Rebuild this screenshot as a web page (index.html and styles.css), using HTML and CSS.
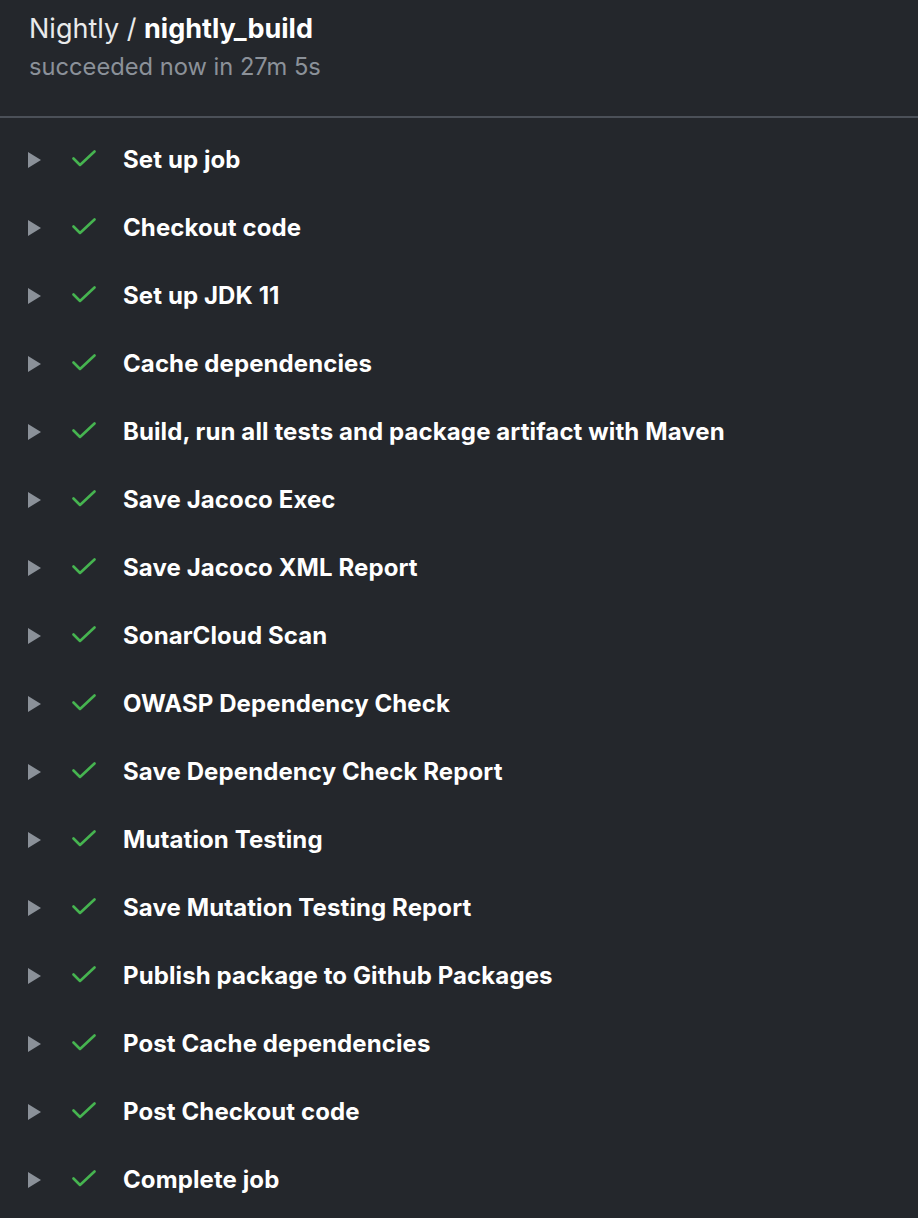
FILE: index.html
```html
<!DOCTYPE html>
<html>
<head>
<meta charset="utf-8">
<link rel="stylesheet" href="styles.css">
</head>
<body>
<div class="page">
  <header class="header">
    <h1 class="title"><span class="wf">Nightly / </span><span class="job">nightly_build</span></h1>
    <div class="status">succeeded now in 27m 5s</div>
  </header>
  <ul class="steps">
    <li class="step"><span class="caret"></span><svg class="check" viewBox="0 0 24 17"><path d="M1.5 8.5 L8 15 L22.5 1.5"/></svg><span class="name">Set up job</span></li>
    <li class="step"><span class="caret"></span><svg class="check" viewBox="0 0 24 17"><path d="M1.5 8.5 L8 15 L22.5 1.5"/></svg><span class="name">Checkout code</span></li>
    <li class="step"><span class="caret"></span><svg class="check" viewBox="0 0 24 17"><path d="M1.5 8.5 L8 15 L22.5 1.5"/></svg><span class="name">Set up JDK 11</span></li>
    <li class="step"><span class="caret"></span><svg class="check" viewBox="0 0 24 17"><path d="M1.5 8.5 L8 15 L22.5 1.5"/></svg><span class="name">Cache dependencies</span></li>
    <li class="step"><span class="caret"></span><svg class="check" viewBox="0 0 24 17"><path d="M1.5 8.5 L8 15 L22.5 1.5"/></svg><span class="name">Build, run all tests and package artifact with Maven</span></li>
    <li class="step"><span class="caret"></span><svg class="check" viewBox="0 0 24 17"><path d="M1.5 8.5 L8 15 L22.5 1.5"/></svg><span class="name">Save Jacoco Exec</span></li>
    <li class="step"><span class="caret"></span><svg class="check" viewBox="0 0 24 17"><path d="M1.5 8.5 L8 15 L22.5 1.5"/></svg><span class="name">Save Jacoco XML Report</span></li>
    <li class="step"><span class="caret"></span><svg class="check" viewBox="0 0 24 17"><path d="M1.5 8.5 L8 15 L22.5 1.5"/></svg><span class="name">SonarCloud Scan</span></li>
    <li class="step"><span class="caret"></span><svg class="check" viewBox="0 0 24 17"><path d="M1.5 8.5 L8 15 L22.5 1.5"/></svg><span class="name">OWASP Dependency Check</span></li>
    <li class="step"><span class="caret"></span><svg class="check" viewBox="0 0 24 17"><path d="M1.5 8.5 L8 15 L22.5 1.5"/></svg><span class="name">Save Dependency Check Report</span></li>
    <li class="step"><span class="caret"></span><svg class="check" viewBox="0 0 24 17"><path d="M1.5 8.5 L8 15 L22.5 1.5"/></svg><span class="name">Mutation Testing</span></li>
    <li class="step"><span class="caret"></span><svg class="check" viewBox="0 0 24 17"><path d="M1.5 8.5 L8 15 L22.5 1.5"/></svg><span class="name">Save Mutation Testing Report</span></li>
    <li class="step"><span class="caret"></span><svg class="check" viewBox="0 0 24 17"><path d="M1.5 8.5 L8 15 L22.5 1.5"/></svg><span class="name">Publish package to Github Packages</span></li>
    <li class="step"><span class="caret"></span><svg class="check" viewBox="0 0 24 17"><path d="M1.5 8.5 L8 15 L22.5 1.5"/></svg><span class="name">Post Cache dependencies</span></li>
    <li class="step"><span class="caret"></span><svg class="check" viewBox="0 0 24 17"><path d="M1.5 8.5 L8 15 L22.5 1.5"/></svg><span class="name">Post Checkout code</span></li>
    <li class="step"><span class="caret"></span><svg class="check" viewBox="0 0 24 17"><path d="M1.5 8.5 L8 15 L22.5 1.5"/></svg><span class="name">Complete job</span></li>
  </ul>
</div>
</body>
</html>
```
FILE: styles.css
```css
html, body {
  margin: 0;
  padding: 0;
  background: #24272c;
}
body {
  font-family: Inter, "Noto Sans", "Liberation Sans", sans-serif;
  color: #ffffff;
}
.page {
  width: 918px;
  height: 1218px;
  overflow: hidden;
}
.header {
  padding: 12px 29px 0;
  height: 118px;
  box-sizing: border-box;
  border-bottom: 2px solid #4b5058;
}
.title {
  margin: 0;
  font-size: 27px;
  line-height: 34px;
  font-weight: 400;
  color: #e9eaeb;
}
.job {
  font-weight: 700;
  color: #ffffff;
}
.status {
  margin-top: 7px;
  font-size: 23.7px;
  line-height: 28px;
  color: #8b9199;
}
.steps {
  list-style: none;
  margin: 0;
  padding: 8px 0 0;
}
.step {
  height: 68px;
  display: flex;
  align-items: center;
  padding-left: 28px;
}
.caret {
  width: 0;
  height: 0;
  border-top: 8px solid transparent;
  border-bottom: 8px solid transparent;
  border-left: 13px solid #8b9199;
}
.check {
  width: 24px;
  height: 17px;
  margin-left: 31px;
  margin-bottom: 3px;
  fill: none;
  stroke: #46b450;
  stroke-width: 2.6;
  stroke-linecap: round;
  stroke-linejoin: round;
}
.name {
  margin-left: 27px;
  padding-bottom: 1px;
  font-size: 24px;
  font-weight: 700;
  letter-spacing: 0.1px;
  color: #ffffff;
}
```
